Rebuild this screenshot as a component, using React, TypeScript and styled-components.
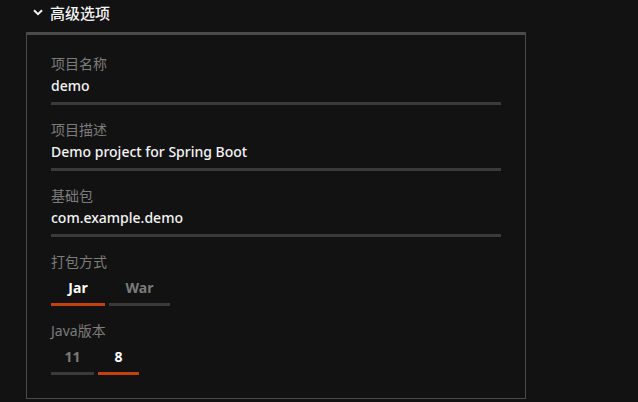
import React from "react";
import styled, { createGlobalStyle } from "styled-components";

const Global = createGlobalStyle`
  html, body { margin: 0; padding: 0; background: #121212; }
  body { font-family: "Noto Sans", "Noto Sans CJK SC", sans-serif; color: #f2f2f2; }
`;

const Page = styled.div`
  width: 638px;
  height: 402px;
  background: #121212;
  overflow: hidden;
`;

const Header = styled.div`
  display: flex;
  align-items: center;
  gap: 7px;
  height: 24px;
  padding-left: 33px;
  font-size: 15px;
  font-weight: 500;
  color: #f4f4f4;
`;

const Panel = styled.div`
  margin: 8px 0 0 26px;
  width: 500px;
  box-sizing: border-box;
  border: 1px solid #4a4a4a;
  border-top-width: 3px;
  padding: 19px 24px 23px;
`;

const Field = styled.div`
  margin-bottom: 15px;
  &:last-child { margin-bottom: 0; }
`;

const Label = styled.div`
  font-size: 14px;
  line-height: 20px;
  color: #7c7c7c;
  margin-bottom: 2px;
`;

const Value = styled.div`
  width: 450px;
  font-size: 14px;
  line-height: 20px;
  font-weight: 500;
  color: #f4f4f4;
  padding-bottom: 6px;
  border-bottom: 3px solid #3a3a3a;
`;

const Tabs = styled.div`
  display: flex;
  gap: 4px;
`;

const Tab = styled.div<{ $active?: boolean; $w: number }>`
  width: ${(p) => p.$w}px;
  box-sizing: border-box;
  padding: 4px 0 5px;
  font-size: 14px;
  line-height: 20px;
  font-weight: 700;
  color: ${(p) => (p.$active ? "#ffffff" : "#7a7a7a")};
  border-bottom: 3px solid ${(p) => (p.$active ? "#c2410c" : "#3a3a3a")};
  text-align: center;
`;

const Chevron = () => (
  <svg width="10" height="7" viewBox="0 0 10 7">
    <path d="M1 1.2 L5 5.2 L9 1.2" fill="none" stroke="#f2f2f2" strokeWidth="2" />
  </svg>
);

export default function App() {
  return (
    <Page>
      <Global />
      <Header>
        <Chevron />
        <span>高级选项</span>
      </Header>
      <Panel>
        <Field>
          <Label>项目名称</Label>
          <Value>demo</Value>
        </Field>
        <Field>
          <Label>项目描述</Label>
          <Value>Demo project for Spring Boot</Value>
        </Field>
        <Field>
          <Label>基础包</Label>
          <Value>com.example.demo</Value>
        </Field>
        <Field>
          <Label>打包方式</Label>
          <Tabs>
            <Tab $active $w={54}>Jar</Tab>
            <Tab $w={61}>War</Tab>
          </Tabs>
        </Field>
        <Field>
          <Label>Java版本</Label>
          <Tabs>
            <Tab $w={43}>11</Tab>
            <Tab $active $w={41}>8</Tab>
          </Tabs>
        </Field>
      </Panel>
    </Page>
  );
}
